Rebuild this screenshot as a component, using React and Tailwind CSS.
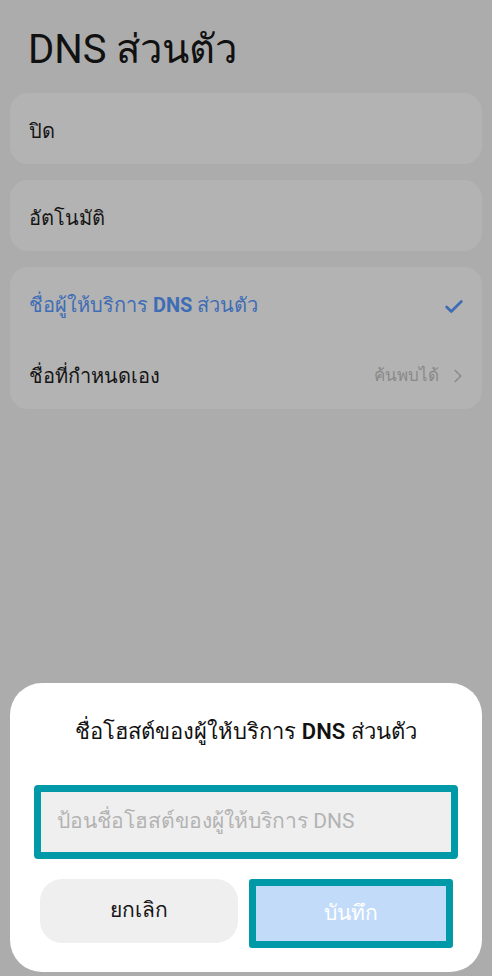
import { Check, ChevronRight } from 'lucide-react';

const font = { fontFamily: 'Roboto, "Noto Sans", "DejaVu Sans", sans-serif' };

const Card = ({ children }) => (
  <div className="mx-[10px] rounded-[18px] bg-[#b3b3b3]">{children}</div>
);

const Row = ({ children, className = '' }) => (
  <div className={`flex h-[71px] items-center px-[19px] pt-[4px] ${className}`}>{children}</div>
);

export default function App() {
  return (
    <div className="relative h-[976px] w-full overflow-hidden bg-[#acacac]" style={font}>
      {/* Settings page behind the sheet */}
      <h1 className="px-[28px] pt-[24px] pb-[18px] text-[40px] leading-[51px] text-[#111]">DNS ส่วนตัว</h1>

      <div className="flex flex-col gap-[16px]">
        <Card>
          <Row className="text-[20px] text-[#161616]">ปิด</Row>
        </Card>
        <Card>
          <Row className="text-[20px] text-[#161616]">อัตโนมัติ</Row>
        </Card>
        <Card>
          <Row className="justify-between text-[20px] text-[#3f6db5]">
            <span>
              ชื่อผู้ให้บริการ <span className="font-bold">DNS</span> ส่วนตัว
            </span>
            <Check size={22} strokeWidth={3} className="-mr-[2px] mt-[4px] text-[#3f6db5]" />
          </Row>
          <Row className="justify-between text-[20px] text-[#161616]">
            <span>ชื่อที่กำหนดเอง</span>
            <span className="flex items-center gap-[8px] text-[17px] text-[#8a8a8a]">
              ค้นพบได้
              <ChevronRight size={22} strokeWidth={1.6} className="-mr-[6px] text-[#8a8a8a]" />
            </span>
          </Row>
        </Card>
      </div>

      {/* Bottom sheet dialog */}
      <div className="absolute left-[10px] right-[10px] bottom-[4px] flex h-[289px] flex-col rounded-[32px] bg-white px-[24px]">
        <div className="pt-[34px] text-center text-[22px] leading-[30px] text-[#111]">
          ชื่อโฮสต์ของผู้ให้บริการ <span className="font-semibold">DNS</span> ส่วนตัว
        </div>

        <div className="mt-[38px] flex h-[74px] items-center rounded-[4px] border-[7px] border-[#0099a8] bg-[#efefef] pl-[16px] text-[21px] text-[#b3b3b3]">
          ป้อนชื่อโฮสต์ของผู้ให้บริการ DNS
        </div>

        <div className="mt-[20px] flex items-start">
          <div className="ml-[6px] flex h-[64px] w-[198px] items-center justify-center rounded-[22px] bg-[#efefef] text-[21px] text-[#161616]">
            ยกเลิก
          </div>
          <div className="ml-[11px] flex h-[69px] w-[204px] items-center justify-center rounded-[3px] border-[7px] border-[#0099a8] bg-[#c2dbf8] text-[21px] text-white">
            บันทึก
          </div>
        </div>
      </div>
    </div>
  );
}
